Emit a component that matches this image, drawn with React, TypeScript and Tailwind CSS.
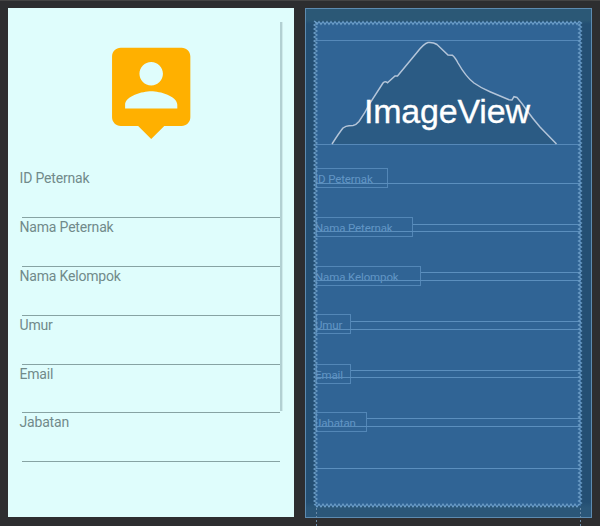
const fields = [
  { name: 'ID Peternak', row: 'h-[49px]', edit: 'h-[48px]', label: '-top-[15px] w-[72px]' },
  { name: 'Nama Peternak', row: 'h-[49px]', edit: 'h-[49px]', label: '-top-[14px] w-[97px]' },
  { name: 'Nama Kelompok', row: 'h-[49px]', edit: 'h-[49px]', label: '-top-[14px] w-[105px]' },
  { name: 'Umur', row: 'h-[49px]', edit: 'h-[48px]', label: '-top-[15px] w-[35px]' },
  { name: 'Email', row: 'h-[48px]', edit: 'h-[49px]', label: '-top-[13px] w-[35px]' },
  { name: 'Jabatan', row: 'h-[49px]', edit: 'h-[50px]', label: '-top-[14px] w-[51px]' },
];

function PersonPin() {
  return (
    <svg className="ml-[91px] mt-[31px] size-[104.4px] shrink-0" viewBox="0 0 24 24" fill="#ffb000">
      <path d="M19 2H5c-1.11 0-2 .9-2 2v14c0 1.1.89 2 2 2h4l3 3 3-3h4c1.1 0 2-.9 2-2V4c0-1.1-.9-2-2-2zm-7 3.3c1.49 0 2.7 1.21 2.7 2.7s-1.21 2.7-2.7 2.7S9.3 9.49 9.3 8s1.21-2.7 2.7-2.7zM18 16H6v-.9c0-2 4-3.1 6-3.1s6 1.1 6 3.1v.9z" />
    </svg>
  );
}

function DesignPreview() {
  return (
    <section className="relative flex h-[509px] w-[286px] flex-col bg-[#dffdfc]">
      <div className="flex h-[161px] flex-col">
        <PersonPin />
      </div>
      {fields.map((f) => (
        <div key={f.name} className={`${f.row} relative pl-[11.5px]`}>
          <div className="text-[14px] leading-[18px] tracking-[-0.18px] text-[#718a8a]">{f.name}</div>
          <div className="absolute bottom-0 left-[14px] h-px w-[258px] bg-[#87a3a3]" />
        </div>
      ))}
      <div className="absolute left-[272px] top-[14px] h-[389px] w-[3px] border-r border-[#cfebeb] bg-[#b2d0d2]" />
    </section>
  );
}

function Mountain() {
  return (
    <svg className="block h-[105px] w-[264px]" viewBox="316 40 264 105">
      <path
        d="M332 144Q339 133 343 128Q346 125.8 349 125.7L353 125.5Q356 125 359 121.5Q365 113 370 103L383 83Q385 80.5 387.5 82.7L395 76L397.5 76L416.5 53Q424 43.5 428 42.6Q433 42 437 44.5L448 55L452.5 55.3Q455 57 458 63Q466 77 474 83Q481 88 490 91.7L509 99.7L512 100L514 96.7L517 97.5Q522 103 526.5 110Q533 119 540 127L556.5 144Z"
        fill="#2b5b84"
      />
      <path
        d="M332 144Q339 133 343 128Q346 125.8 349 125.7L353 125.5Q356 125 359 121.5Q365 113 370 103L383 83Q385 80.5 387.5 82.7L395 76L397.5 76L416.5 53Q424 43.5 428 42.6Q433 42 437 44.5L448 55L452.5 55.3Q455 57 458 63Q466 77 474 83Q481 88 490 91.7L509 99.7L512 100L514 96.7L517 97.5Q522 103 526.5 110Q533 119 540 127L556.5 144"
        fill="none"
        stroke="#b4c5d9"
        strokeWidth="1.5"
      />
      <text x="364" y="123" fontSize="34" textLength="166" fill="#fff" stroke="#fff" strokeWidth="0.3" fontFamily="Liberation Sans, Arial, sans-serif">
        ImageView
      </text>
    </svg>
  );
}

function zigzag(x1: number, y1: number, length: number, vertical: boolean) {
  let d = `M${x1} ${y1}`;
  for (let i = 0; i < length; i += 4) {
    d += vertical ? 'l3 2l-3 2' : 'l2 3l2 -3';
  }
  return d;
}

function ScrollEdges() {
  return (
    <svg
      className="pointer-events-none absolute -left-px -top-px h-[518px] w-[287px]"
      viewBox="305 8 287 518"
      overflow="visible"
      fill="none"
      stroke="#6b9cc6"
      strokeWidth="1.2"
    >
      <path d={zigzag(314, 21, 484, true)} />
      <path d={zigzag(578.5, 21, 484, true)} />
      <path d={zigzag(315, 21.5, 264, false)} />
      <path d={zigzag(315, 504, 264, false)} />
      <path d="M316.5 508V526M580.5 508V526" stroke="#6b8ca8" strokeWidth="1" strokeDasharray="2 2" />
    </svg>
  );
}

function Blueprint() {
  return (
    <section className="relative h-[510px] w-[287px] border border-[#5d8bb0] bg-[#244f73] px-[10px] pt-[13px] [background-image:linear-gradient(#2b5876_0_11px,#244f73_15px_493px,#2b5779_499px)]">
      <div className="flex h-[484px] flex-col bg-[#306495]">
        <div className="mt-[18px] h-[105px] border-y border-[#5689b9]">
          <div className="-mt-px">
            <Mountain />
          </div>
        </div>
        <div className="mt-[38px]">
          {fields.map((f) => (
            <div key={f.name} className={`${f.edit} relative`}>
              <div
                className={`${f.label} absolute left-0 h-5 overflow-hidden whitespace-nowrap border border-[#5387b7] bg-[#306495] text-[11.5px] leading-[21px] tracking-[-0.12px] text-[#6296c5]`}
              >
                <span className="-ml-[2px]">{f.name}</span>
              </div>
              <div className={`relative border-y border-[#5b8fbe] ${f.name === 'Jabatan' ? 'h-[43px]' : 'h-[42px]'}`} />
            </div>
          ))}
        </div>
      </div>
      <ScrollEdges />
    </section>
  );
}

export default function App() {
  return (
    <main className="h-[526px] w-[600px] overflow-hidden border-t border-[#444] bg-[#2d2e30] font-['Roboto',sans-serif]">
      <div className="flex gap-[11px] pl-2 pt-[7px]">
        <DesignPreview />
        <Blueprint />
      </div>
    </main>
  );
}
